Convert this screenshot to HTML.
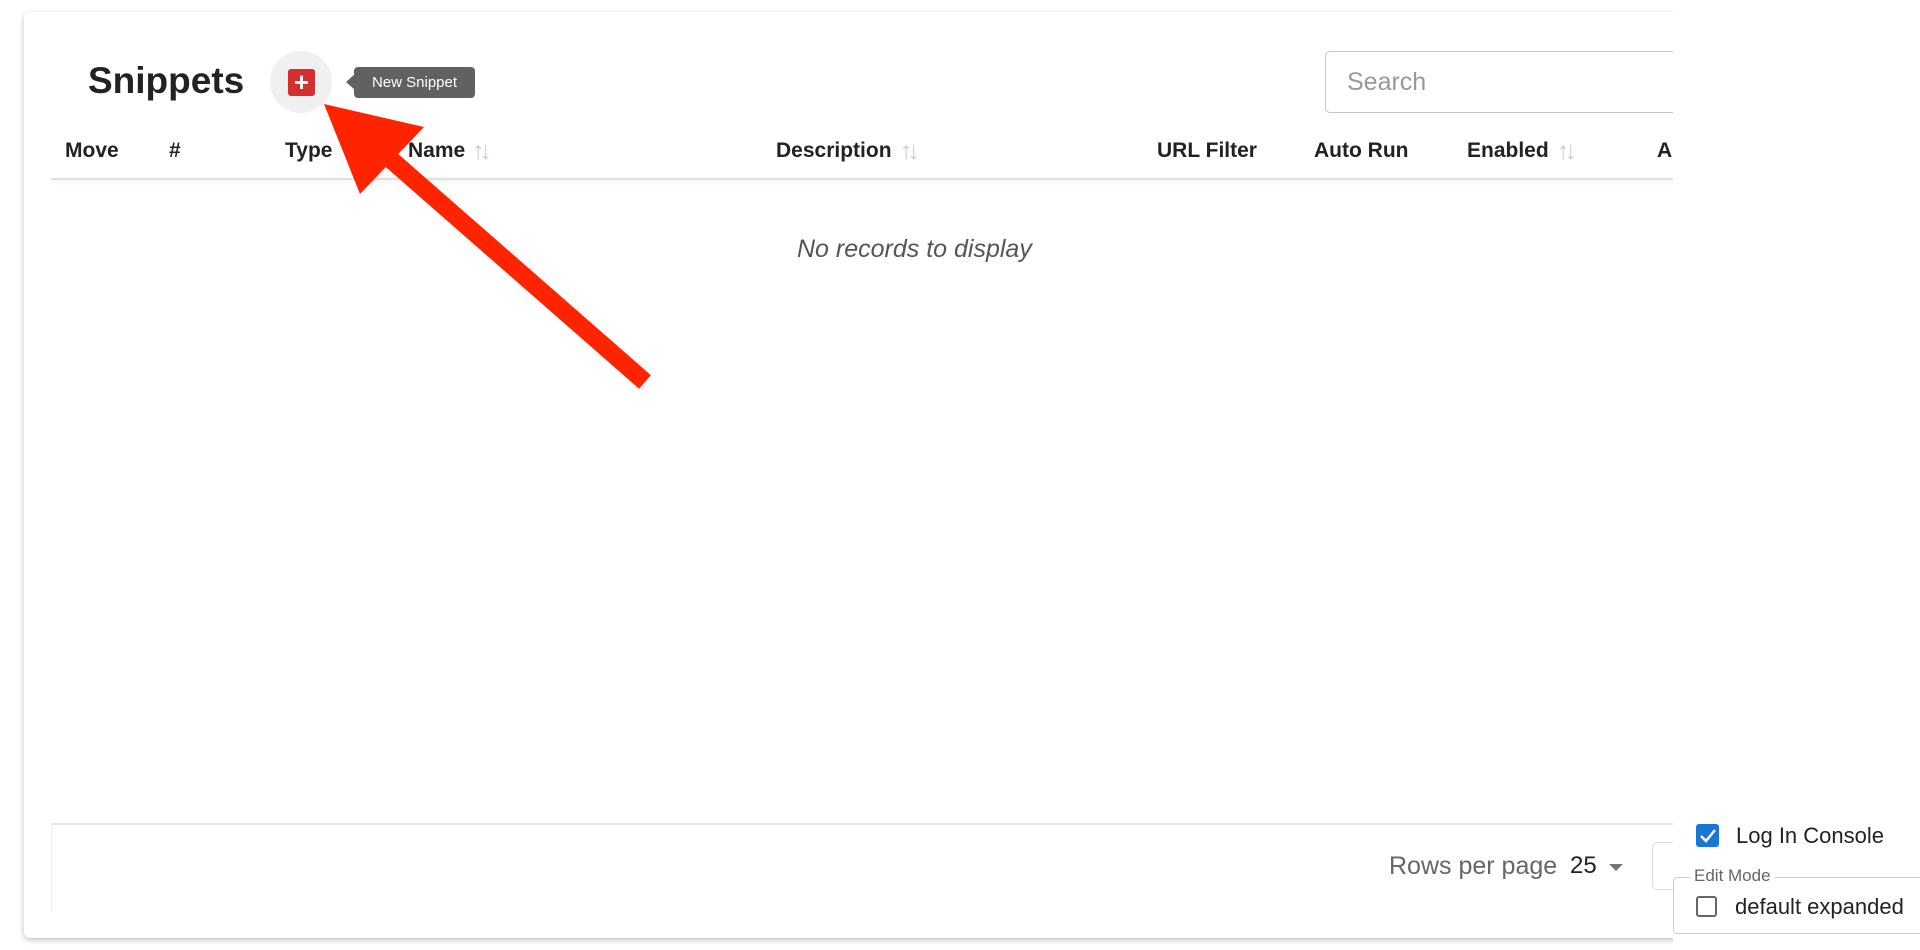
<!DOCTYPE html>
<html><head><meta charset="utf-8"><style>
*{margin:0;padding:0;box-sizing:border-box}
body{width:1920px;height:950px;background:#fff;font-family:"Liberation Sans",Arial,sans-serif;position:relative;overflow:hidden;color:#222}
.card{position:absolute;left:24px;top:12px;width:1700px;height:926px;background:#fff;border-radius:6px;box-shadow:0 2px 6px rgba(0,0,0,.25)}
.clip{position:absolute;left:1673px;top:0;width:247px;height:950px;background:#fff}
.a{position:absolute;white-space:nowrap}
.h{font-weight:bold;font-size:21px;top:139px}
.sort{position:absolute;top:137px;color:#ccc;font-size:25px;letter-spacing:-5px;white-space:nowrap}
</style></head><body>
<div class="card"></div>
<div class="a" style="left:88px;top:60px;font-size:37px;font-weight:bold;color:#222">Snippets</div>
<div class="a" style="left:270px;top:51px;width:62px;height:62px;border-radius:50%;background:#f0f0f0"></div>
<div class="a" style="left:288px;top:69px;width:27px;height:27px;border-radius:3px;background:#d32f2f;color:#fff;font-size:26px;font-weight:bold;line-height:26px;text-align:center">+</div>
<div class="a" style="left:346px;top:74px;width:0;height:0;border-top:8px solid transparent;border-bottom:8px solid transparent;border-right:9px solid #616161"></div>
<div class="a" style="left:354px;top:67px;width:121px;height:31px;border-radius:4px;background:#616161;color:#fff;font-size:15px;line-height:31px;text-align:center">New Snippet</div>
<div class="a" style="left:1325px;top:51px;width:400px;height:62px;border:1px solid #c4c4c4;border-radius:5px"></div>
<div class="a" style="left:1347px;top:68px;font-size:25px;color:#999">Search</div>
<div class="a h" style="left:65px">Move</div>
<div class="a h" style="left:169px">#</div>
<div class="a h" style="left:285px">Type</div>
<div class="a h" style="left:408px">Name</div><div class="sort" style="left:472px">↑↓</div>
<div class="a h" style="left:776px">Description</div><div class="sort" style="left:900px">↑↓</div>
<div class="a h" style="left:1157px">URL Filter</div>
<div class="a h" style="left:1314px">Auto Run</div>
<div class="a h" style="left:1467px">Enabled</div><div class="sort" style="left:1557px">↑↓</div>
<div class="a h" style="left:1657px">A</div>
<div class="a" style="left:51px;top:178px;width:1650px;height:2px;background:#e0e0e0;box-shadow:0 2px 5px rgba(0,0,0,.08)"></div>
<div class="a" style="left:797px;top:235px;font-size:25px;font-style:italic;color:#555">No records to display</div>
<div class="a" style="left:51px;top:823px;width:1650px;height:2px;background:#e6e6e6"></div>
<div class="a" style="left:51px;top:824px;width:1px;height:88px;background:#eee"></div>
<div class="a" style="left:1389px;top:852px;font-size:25px;color:#666">Rows per page</div>
<div class="a" style="left:1570px;top:852px;font-size:24px;color:#222">25</div>
<div class="a" style="left:1609px;top:864px;width:0;height:0;border-left:7px solid transparent;border-right:7px solid transparent;border-top:7px solid #777"></div>
<div class="a" style="left:1652px;top:842px;width:60px;height:48px;border:1px solid #ddd;border-radius:5px"></div>
<div class="clip"></div>
<svg class="a" style="left:0;top:0" width="1920" height="950">
<line x1="380" y1="150" x2="645" y2="382" stroke="#ff2400" stroke-width="18"/>
<polygon points="324,104 424,127 360,194" fill="#ff2400"/>
</svg>
<div class="a" style="left:1696px;top:824px;width:23px;height:23px;border-radius:3px;background:#1976d2"></div>
<svg class="a" style="left:1696px;top:824px" width="23" height="23"><path d="M5 12 L10 17 L19 6" stroke="#fff" stroke-width="2.5" fill="none"/></svg>
<div class="a" style="left:1736px;top:823px;font-size:22px;color:#222">Log In Console</div>
<div class="a" style="left:1673px;top:877px;width:260px;height:57px;border:1px solid #ccc;border-radius:4px;background:#fff"></div>
<div class="a" style="left:1690px;top:866px;padding:0 4px;background:#fff;font-size:17px;color:#666">Edit Mode</div>
<div class="a" style="left:1696px;top:896px;width:21px;height:21px;border:2px solid #666;border-radius:3px"></div>
<div class="a" style="left:1735px;top:894px;font-size:22px;color:#222">default expanded</div>
</body></html>
